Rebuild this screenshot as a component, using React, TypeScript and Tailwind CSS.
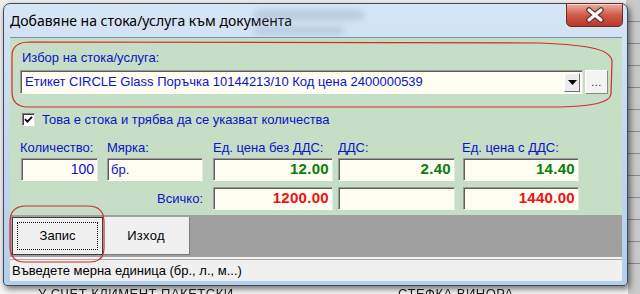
import React from "react";

const sunken =
  "bg-[#fffcf2] border border-t-[#9a9a9a] border-l-[#9a9a9a] border-b-white border-r-[#e6e6e6] shadow-[inset_1px_1px_0_#5e5e5e]";

function Field({ w, children, cls }: { w: string; children?: React.ReactNode; cls?: string }) {
  return (
    <div className={`${w} h-[23px] ${sunken} flex items-center ${cls ?? ""}`}>{children}</div>
  );
}

export default function App() {
  return (
    <div className="w-[640px] h-[294px] relative overflow-hidden bg-[#eeeeee] font-['Liberation_Sans',Arial,sans-serif]">
      {/* desktop / background app */}
      <div className="absolute right-0 top-0 w-[14px] h-full bg-[#c9c9c9] flex flex-col">
        <div className="h-[22px] border-b border-[#8a8a8a]" />
        <div className="h-[22px] border-b border-[#8a8a8a]" />
        <div className="h-[22px] border-b border-[#8a8a8a]" />
        <div className="h-[22px] border-b border-[#8a8a8a]" />
        <div className="h-[22px] border-b border-[#8a8a8a]" />
        <div className="h-[22px] border-b border-[#8a8a8a]" />
        <div className="h-[22px] border-b border-[#8a8a8a]" />
        <div className="h-[22px] border-b border-[#8a8a8a]" />
        <div className="h-[22px] border-b border-[#8a8a8a]" />
        <div className="h-[22px] border-b border-[#8a8a8a]" />
        <div className="h-[22px] border-b border-[#8a8a8a]" />
        <div className="h-[22px] border-b border-[#8a8a8a]" />
      </div>
      <div className="absolute left-0 bottom-0 w-[628px] h-[10px] bg-[#f6f6f6]" />
      <div className="absolute left-[38px] top-[284px] text-[13px] text-[#202020] blur-[0.6px] tracking-[0.5px]">
        У СЧЕТ КЛИМЕНТ ПАКЕТСКИ
      </div>
      <div className="absolute left-[398px] top-[284px] text-[13px] text-[#202020] blur-[0.6px] tracking-[0.5px]">
        СТЕФКА ВИНОРА
      </div>

      {/* window */}
      <div className="absolute left-[3px] top-[3px] w-[625px] h-[283px] rounded-t-[7px] rounded-b-[4px] border border-[#3d4b5c] bg-gradient-to-b from-[#d7e6f5] via-[#c2d7ee] to-[#b6cfe9] shadow-[2px_3px_6px_rgba(0,0,0,0.55)] flex flex-col">
        {/* glass blur patches */}
        <div className="absolute left-[250px] top-[6px] w-[110px] h-[10px] rounded-full bg-[#8fa3bb] opacity-40 blur-[3px]" />
        <div className="absolute left-[250px] top-[22px] w-[90px] h-[9px] rounded-full bg-[#8fa3bb] opacity-35 blur-[3px]" />

        {/* title bar */}
        <div className="h-[33px] flex items-center pl-[6px] shrink-0">
          <span className="text-[14px] text-black font-['Noto_Sans',sans-serif] leading-none pt-[1px]">
            Добавяне на стока/услуга към документа
          </span>
        </div>
        {/* close button */}
        <div className="absolute top-[-1px] right-[4px] w-[57px] h-[24px] rounded-b-[5px] border border-[#6b2a22] bg-gradient-to-b from-[#eab0a4] via-[#cf5a48] to-[#b9382a] flex items-center justify-center shadow-[inset_0_1px_0_rgba(255,255,255,0.5)]">
          <svg width="20" height="16" viewBox="0 0 20 16">
            <path d="M4 3 L16 13 M16 3 L4 13" stroke="#5a2a24" strokeWidth="5.5" strokeLinecap="round" />
            <path d="M4 3 L16 13 M16 3 L4 13" stroke="#ffffff" strokeWidth="3.2" strokeLinecap="round" />
          </svg>
        </div>

        {/* client area */}
        <div className="flex-1 pl-[6px] pr-[5px] pb-[4px] flex flex-col">
          <div className="w-[612px] h-[244px] flex flex-col border-t border-[#7d93ac]">
            {/* green panel */}
            <div className="h-[177px] bg-[#c5dec5] pl-[10px] pt-[12px] flex flex-col">
              <div className="pl-[2px] text-[13px] leading-[15px] text-[#0a14c8]">Избор на стока/услуга:</div>
              <div className="mt-[5px] flex">
                <div className={`w-[563px] h-[24px] ${sunken} flex items-center justify-between pl-[4px] pr-[2px]`}>
                  <span className="text-[13px] text-[#0a14c8]">
                    Етикет CIRCLE Glass Поръчка 10144213/10 Код цена 2400000539
                  </span>
                  <div className="w-[16px] h-[19px] bg-[#ececec] border border-t-white border-l-white border-b-[#707070] border-r-[#707070] flex items-center justify-center">
                    <svg width="9" height="5" viewBox="0 0 9 5">
                      <path d="M0 0 H9 L4.5 5 Z" fill="#000" />
                    </svg>
                  </div>
                </div>
                <div className="ml-[2px] w-[23px] h-[24px] bg-[#f3f3f3] border border-t-white border-l-white border-b-[#8a8a8a] border-r-[#8a8a8a] flex items-end justify-center pb-[5px]">
                  <span className="text-[11px] leading-none text-[#202020] tracking-[0.5px]">...</span>
                </div>
              </div>

              <div className="mt-[18px] pl-[2px] flex items-center">
                <div className="w-[13px] h-[13px] bg-white border border-t-[#808080] border-l-[#808080] border-b-white border-r-[#e0e0e0] shadow-[inset_1px_1px_0_#404040] flex items-center justify-center">
                  <svg width="9" height="9" viewBox="0 0 9 9">
                    <path d="M1 4.2 L3.4 6.6 L8 1.8" stroke="#000" strokeWidth="1.8" fill="none" />
                  </svg>
                </div>
                <span className="ml-[7px] text-[13px] leading-[15px] text-[#0a14c8]">
                  Това е стока и трябва да се указват количества
                </span>
              </div>

              {/* labels */}
              <div className="mt-[13px] flex text-[13px] leading-[16px] text-[#0a14c8]">
                <div className="w-[87px]">Количество:</div>
                <div className="w-[106px]">Мярка:</div>
                <div className="w-[125px]">Ед. цена без ДДС:</div>
                <div className="w-[124px]">ДДС:</div>
                <div>Ед. цена с ДДС:</div>
              </div>

              {/* row 1 */}
              <div className="mt-[2px] flex pl-[1px]">
                <Field w="w-[77px]" cls="justify-end pr-[3px] mr-[9px]">
                  <span className="text-[14px] text-[#0a14c8]">100</span>
                </Field>
                <Field w="w-[96px]" cls="pl-[3px] mr-[10px]">
                  <span className="text-[13px] text-[#0a14c8]">бр.</span>
                </Field>
                <Field w="w-[120px]" cls="justify-end pr-[3px] mr-[5px]">
                  <span className="text-[15px] font-bold text-[#0a7d0a] tracking-[0.3px]">12.00</span>
                </Field>
                <Field w="w-[117px]" cls="justify-end pr-[3px] mr-[8px]">
                  <span className="text-[15px] font-bold text-[#0a7d0a] tracking-[0.3px]">2.40</span>
                </Field>
                <Field w="w-[116px]" cls="justify-end pr-[3px]">
                  <span className="text-[15px] font-bold text-[#0a7d0a] tracking-[0.3px]">14.40</span>
                </Field>
              </div>

              {/* row 2 */}
              <div className="mt-[6px] flex pl-[1px]">
                <div className="w-[192px] h-[23px] flex items-center justify-end pr-[10px] text-[13px] text-[#0a14c8]">
                  Всичко:
                </div>
                <Field w="w-[120px]" cls="justify-end pr-[3px] mr-[5px]">
                  <span className="text-[15px] font-bold text-[#f01010] tracking-[0.3px]">1200.00</span>
                </Field>
                <Field w="w-[117px]" cls="mr-[8px]" />
                <Field w="w-[116px]" cls="justify-end pr-[3px]">
                  <span className="text-[15px] font-bold text-[#f01010] tracking-[0.3px]">1440.00</span>
                </Field>
              </div>
            </div>

            {/* button bar */}
            <div className="h-[42px] bg-[#a0a0a0] flex pl-[2px] py-[2px]">
              <div className="w-[91px] h-[38px] bg-[#f0f0f0] border border-[#3c3c3c] p-[4px]">
                <div className="w-full h-full border border-dotted border-black flex items-center justify-center">
                  <span className="text-[13px] text-black">Запис</span>
                </div>
              </div>
              <div className="w-[87px] h-[38px] bg-[#f0f0f0] border-r border-b border-[#7a7a7a] flex items-center justify-center">
                <span className="text-[13px] text-black tracking-[0.3px]">Изход</span>
              </div>
            </div>

            {/* status bar */}
            <div className="h-[3px] bg-[#f4f4f4] border-b border-[#a8a8a8]" />
            <div className="h-[21px] bg-[#f0f0f0] flex items-center pl-[2px]">
              <span className="text-[13px] text-black">Въведете мерна единица (бр., л., м...)</span>
            </div>
          </div>
        </div>
      </div>

      {/* red annotation outlines */}
      <svg className="absolute left-0 top-0 pointer-events-none" width="640" height="294" viewBox="0 0 640 294">
        <path
          d="M30 42 L540 43 C592 45 612 50 612 62 L611 94 C610 103 592 106 560 107 L26 107 C16 106 12 100 12 92 L12 56 C12 47 18 42 30 42 Z"
          fill="none"
          stroke="#d42a2a"
          strokeWidth="1.2"
        />
        <path
          d="M26 206 L88 206 C99 206 104 212 104 222 L104 248 C104 257 99 262 90 262 L24 262 C15 262 10 256 10 247 L10 222 C10 212 15 206 26 206 Z"
          fill="none"
          stroke="#d42a2a"
          strokeWidth="1.2"
        />
      </svg>
    </div>
  );
}
